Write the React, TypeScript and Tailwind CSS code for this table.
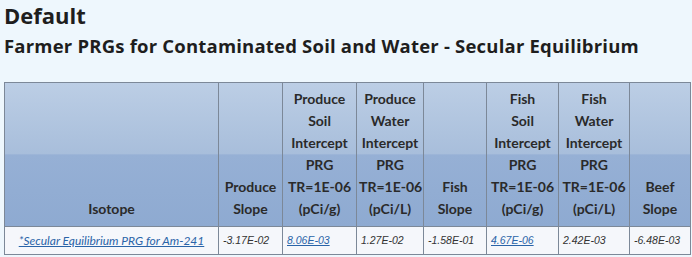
export default function App() {
  const headers = [
    { lines: ["Isotope"], w: "w-[214px]" },
    { lines: ["Produce", "Slope"], w: "w-[64px]" },
    { lines: ["Produce", "Soil", "Intercept", "PRG", "TR=1E-06", "(pCi/g)"], w: "w-[74px]" },
    { lines: ["Produce", "Water", "Intercept", "PRG", "TR=1E-06", "(pCi/L)"], w: "w-[67px]" },
    { lines: ["Fish", "Slope"], w: "w-[63px]" },
    { lines: ["Fish", "Soil", "Intercept", "PRG", "TR=1E-06", "(pCi/g)"], w: "w-[72px]" },
    { lines: ["Fish", "Water", "Intercept", "PRG", "TR=1E-06", "(pCi/L)"], w: "w-[71px]" },
    { lines: ["Beef", "Slope"], w: "w-[61px]" },
  ];

  const values = [
    { v: "-3.17E-02" },
    { v: "8.06E-03", link: true },
    { v: "1.27E-02" },
    { v: "-1.58E-01" },
    { v: "4.67E-06", link: true },
    { v: "2.42E-03" },
    { v: "-6.48E-03" },
  ];

  return (
    <div className="min-h-[257px] w-[692px] bg-[#eef7fd] pl-[4px] font-['Lato',sans-serif] text-[#1e1e1e]">
      <h1 className="font-['Open_Sans',sans-serif] text-[22px] font-bold leading-[30px]">Default</h1>
      <h2 className="mt-[3px] font-['Open_Sans',sans-serif] text-[18.5px] font-bold leading-[26px] tracking-[0.2px]">
        Farmer PRGs for Contaminated Soil and Water - Secular Equilibrium
      </h2>

      <table className="mt-[23px] w-[686px] table-fixed border-collapse border border-[#7c8898]">
        <colgroup>
          {headers.map((h, i) => (
            <col key={i} className={h.w} />
          ))}
        </colgroup>
        <thead>
          <tr className="bg-[linear-gradient(to_bottom,#bccee5_0%,#a8bedb_49%,#96b0d5_50%,#8eaad1_100%)]">
            {headers.map((h, i) => (
              <th
                key={i}
                className="border border-[#7c8898] px-[2px] pb-[6px] pt-[5px] text-center align-bottom text-[14px] font-bold leading-[22px] text-[#2a2a2a]"
              >
                {h.lines.map((l, j) => (
                  <div key={j} className="whitespace-nowrap">{l}</div>
                ))}
              </th>
            ))}
          </tr>
        </thead>
        <tbody>
          <tr className="bg-[#f5f7fb]">
            <td className="border border-[#7c8898] px-[4px] py-[6px] text-center text-[12px] italic leading-[15px]">
              <a href="#" className="text-[#2a64a8] underline">*Secular Equilibrium PRG for Am-241</a>
            </td>
            {values.map((c, i) => (
              <td
                key={i}
                className="border border-[#7c8898] px-[4px] py-[6px] text-left font-['Liberation_Sans',sans-serif] text-[10.5px] italic leading-[15px] text-[#333]"
              >
                {c.link ? (
                  <a href="#" className="text-[#2a64a8] underline">{c.v}</a>
                ) : (
                  c.v
                )}
              </td>
            ))}
          </tr>
        </tbody>
      </table>
    </div>
  );
}
